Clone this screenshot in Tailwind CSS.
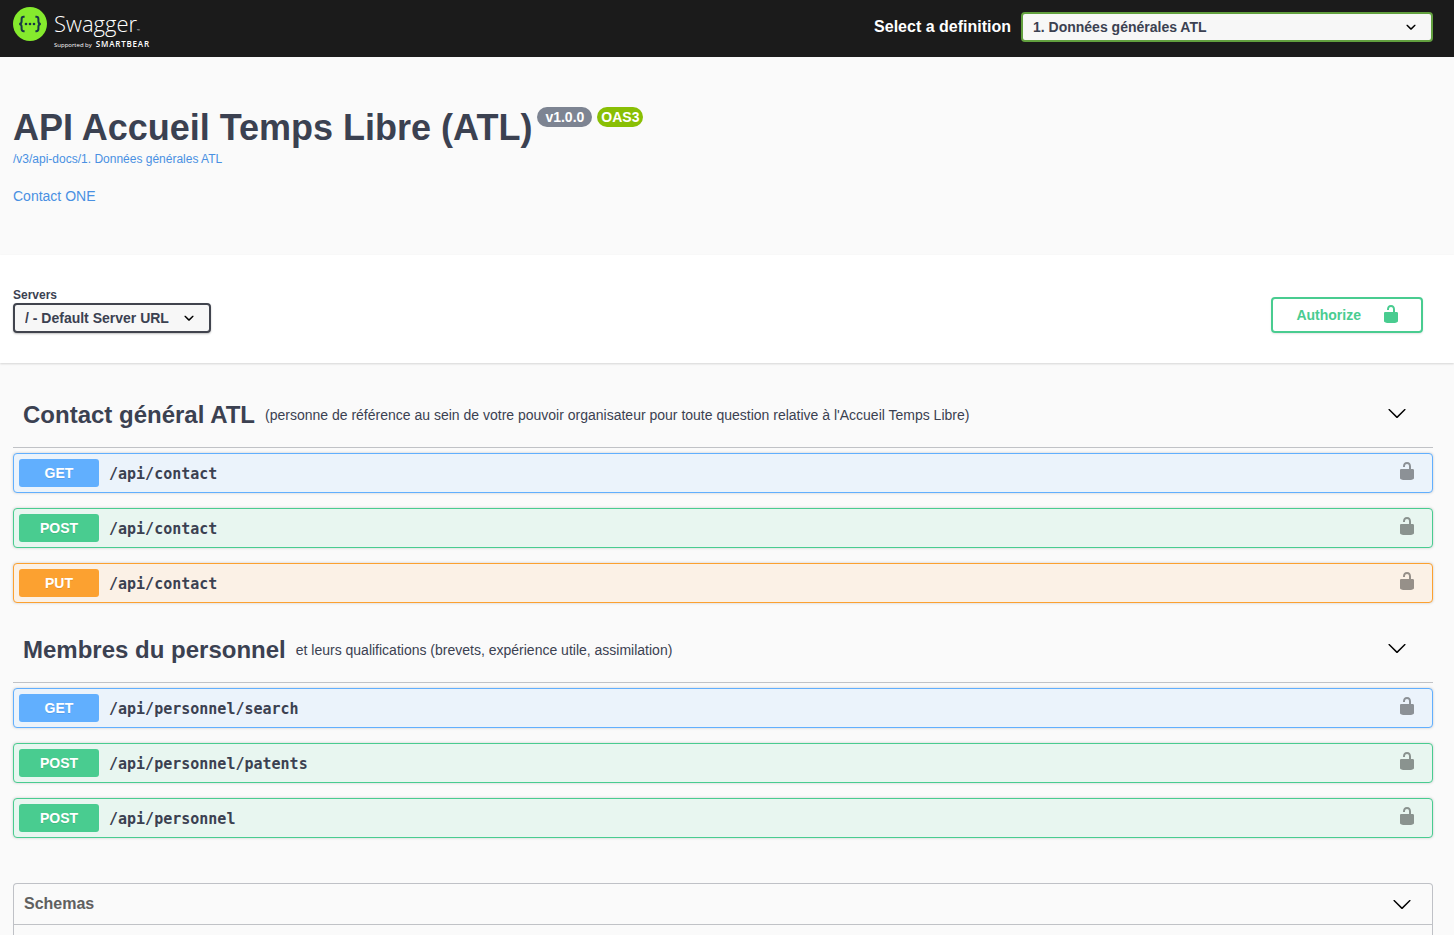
<!DOCTYPE html>
<html lang="fr">
<head>
<meta charset="utf-8">
<meta name="viewport" content="width=device-width, initial-scale=1">
<title>Swagger UI</title>
<script src="https://cdn.jsdelivr.net/npm/@tailwindcss/browser@4"></script>
</head>
<body class="flex min-h-screen flex-col bg-[#fafafa] font-['Liberation_Sans',Arial,sans-serif] text-[#3b4151]">
<svg class="hidden" aria-hidden="true">
  <symbol id="unlocked" viewBox="0 0 20 20"><path d="M15.8 8H14V5.6C14 2.703 12.665 1 10 1 7.334 1 6 2.703 6 5.6V6h2v-.801C8 3.754 8.797 3 10 3c1.203 0 2 .754 2 2.199V8H4c-.553 0-1 .646-1 1.199V17c0 .549.428 1.139.951 1.307l1.197.387C5.672 18.861 6.55 19 7.1 19h5.8c.549 0 1.428-.139 1.951-.307l1.196-.387c.524-.167.953-.757.953-1.306V9.199C17 8.646 16.352 8 15.8 8z"/></symbol>
  <symbol id="arrow-down" viewBox="0 0 20 20"><path d="M17.418 6.109c.272-.268.709-.268.979 0s.271.701 0 .969l-7.908 7.83c-.27.268-.707.268-.979 0l-7.908-7.83c-.27-.268-.27-.701 0-.969.271-.268.709-.268.979 0L10 13.25l7.418-7.141z"/></symbol>
  <symbol id="select-arrow" viewBox="0 0 20 20"><path d="M13.418 7.859c.271-.268.709-.268.978 0 .27.268.272.701 0 .969l-3.908 3.83c-.27.268-.707.268-.979 0l-3.908-3.83c-.27-.267-.27-.701 0-.969.271-.268.709-.268.978 0L10 11l3.418-3.141z"/></symbol>
</svg>

<header class="flex h-[57px] items-center justify-between bg-[#1b1b1b] pr-[21px] pl-[13px] text-white">
  <a href="#" class="flex h-[43px] items-start gap-[7px]" aria-label="Swagger, supported by SmartBear">
    <svg class="size-[34px] shrink-0" viewBox="0 0 34 34" aria-hidden="true">
      <circle cx="17" cy="17" r="17" fill="#85ea2d"/>
      <g fill="none" stroke="#173647" stroke-width="2">
        <path d="M11.600 9.800h-.9c-1.500 0-2.100.7-2.100 2.100v2.300c0 1.800-.6 2.600-2.300 2.800 1.700.2 2.300 1 2.300 2.800v2.300c0 1.400.6 2.100 2.100 2.100h.9"/>
        <path d="M22.400 9.800h.9c1.500 0 2.100.7 2.100 2.100v2.300c0 1.800.6 2.600 2.300 2.800-1.700.2-2.300 1-2.300 2.800v2.300c0 1.400-.6 2.100-2.100 2.100h-.9"/>
      </g>
      <g fill="#173647"><circle cx="13" cy="17" r="1.300"/><circle cx="17" cy="17" r="1.300"/><circle cx="21" cy="17" r="1.300"/></g>
    </svg>
    <span class="flex flex-col pt-px font-['Open_Sans',sans-serif]">
      <span class="flex items-baseline text-[22px] leading-[30px] font-light">Swagger<span class="text-[4px] leading-none">™</span></span>
      <span class="flex items-baseline gap-1 text-[6px] leading-[11px] whitespace-nowrap">Supported by<span class="text-[8px] font-semibold tracking-widest">SMARTBEAR</span></span>
    </span>
  </a>
  <div class="flex items-center gap-[10px] pb-[3px]">
    <label for="definition" class="text-base font-bold">Select a definition</label>
    <div class="relative w-[412px]">
      <select id="definition" class="h-[30px] w-full appearance-none rounded border-2 border-[#62a03f] bg-[#f7f7f7] pr-10 pl-[10px] text-sm font-bold text-[#3b4151]">
        <option>1. Données générales ATL</option>
      </select>
      <svg class="pointer-events-none absolute top-[5px] right-3 size-5 fill-black" aria-hidden="true"><use href="#select-arrow"/></svg>
    </div>
  </div>
</header>

<section class="h-[198px] pt-12 pl-[13px]">
  <div class="flex items-start gap-[5px]">
    <h1 class="text-4xl leading-[46px] font-bold">API Accueil Temps Libre (ATL)</h1>
    <span class="mt-[2px] rounded-full bg-[#7d8492] px-2 text-sm leading-5 font-bold text-white">v1.0.0</span>
    <span class="mt-[2px] rounded-full bg-[#89bf04] px-1 text-sm leading-5 font-bold text-white">OAS3</span>
  </div>
  <a href="#" class="block text-xs leading-4 text-[#4990e2]">/v3/api-docs/1. Données générales ATL</a>
  <a href="#" class="mt-[19px] block text-sm text-[#4990e2]">Contact ONE</a>
</section>

<section class="flex h-[108px] items-start justify-between bg-white pr-[31px] pl-[13px] shadow-[0_1px_2px_rgba(0,0,0,0.15)]">
  <div class="pt-8">
    <label for="servers" class="block text-xs font-bold">Servers</label>
    <div class="relative w-[198px]">
      <select id="servers" class="h-[30px] w-full appearance-none rounded border-2 border-[#41444e] bg-[#f7f7f7] pr-8 pl-[10px] text-sm font-bold text-[#3b4151] shadow-[0_1px_2px_rgba(0,0,0,0.25)]">
        <option>/ - Default Server URL</option>
      </select>
      <svg class="pointer-events-none absolute top-[5px] right-3 size-5 fill-black" aria-hidden="true"><use href="#select-arrow"/></svg>
    </div>
  </div>
  <button type="button" class="mt-[42px] flex h-9 items-center gap-5 rounded border-2 border-[#49cc90] pr-5 pl-[23px] text-sm font-bold text-[#49cc90] shadow-[0_1px_2px_rgba(0,0,0,0.1)]">Authorize<svg class="mb-[2px] size-5 fill-current" aria-hidden="true"><use href="#unlocked"/></svg></button>
</section>

<main class="flex grow flex-col pr-[21px] pl-[13px]">
  <section class="pt-[19px]">
    <div class="flex h-[66px] items-center gap-[10px] border-b border-[#3b4151]/30 pr-[26px] pl-[10px]">
      <h2 class="text-2xl font-bold">Contact général ATL</h2>
      <p class="grow text-sm">(personne de référence au sein de votre pouvoir organisateur pour toute question relative à l'Accueil Temps Libre)</p>
      <button type="button" class="pb-1" aria-label="Replier Contact général ATL"><svg class="size-5 fill-black" aria-hidden="true"><use href="#arrow-down"/></svg></button>
    </div>
    <div class="flex flex-col gap-[15px] pt-[5px]">
      <div class="flex h-10 items-center rounded border border-[#61affe] bg-[#ebf3fb] pr-[15px] pl-[5px] shadow-[0_0_3px_rgba(0,0,0,0.19)]">
        <span class="w-20 rounded-[3px] bg-[#61affe] text-center text-sm leading-7 font-bold text-white text-shadow-[0_1px_0_rgba(0,0,0,0.1)]">GET</span>
        <a href="#" class="grow px-[10px] pt-[2px] font-['DejaVu_Sans_Mono',monospace] text-[15px] font-bold">/api/contact</a>
        <button type="button" class="pb-1" aria-label="Autorisation"><svg class="size-5 fill-black opacity-40" aria-hidden="true"><use href="#unlocked"/></svg></button>
      </div>
      <div class="flex h-10 items-center rounded border border-[#49cc90] bg-[#e8f6f0] pr-[15px] pl-[5px] shadow-[0_0_3px_rgba(0,0,0,0.19)]">
        <span class="w-20 rounded-[3px] bg-[#49cc90] text-center text-sm leading-7 font-bold text-white text-shadow-[0_1px_0_rgba(0,0,0,0.1)]">POST</span>
        <a href="#" class="grow px-[10px] pt-[2px] font-['DejaVu_Sans_Mono',monospace] text-[15px] font-bold">/api/contact</a>
        <button type="button" class="pb-1" aria-label="Autorisation"><svg class="size-5 fill-black opacity-40" aria-hidden="true"><use href="#unlocked"/></svg></button>
      </div>
      <div class="flex h-10 items-center rounded border border-[#fca130] bg-[#fbf1e6] pr-[15px] pl-[5px] shadow-[0_0_3px_rgba(0,0,0,0.19)]">
        <span class="w-20 rounded-[3px] bg-[#fca130] text-center text-sm leading-7 font-bold text-white text-shadow-[0_1px_0_rgba(0,0,0,0.1)]">PUT</span>
        <a href="#" class="grow px-[10px] pt-[2px] font-['DejaVu_Sans_Mono',monospace] text-[15px] font-bold">/api/contact</a>
        <button type="button" class="pb-1" aria-label="Autorisation"><svg class="size-5 fill-black opacity-40" aria-hidden="true"><use href="#unlocked"/></svg></button>
      </div>
    </div>
  </section>

  <section class="pt-[14px]">
    <div class="flex h-[66px] items-center gap-[10px] border-b border-[#3b4151]/30 pr-[26px] pl-[10px]">
      <h2 class="text-2xl font-bold">Membres du personnel</h2>
      <p class="grow text-sm">et leurs qualifications (brevets, expérience utile, assimilation)</p>
      <button type="button" class="pb-1" aria-label="Replier Membres du personnel"><svg class="size-5 fill-black" aria-hidden="true"><use href="#arrow-down"/></svg></button>
    </div>
    <div class="flex flex-col gap-[15px] pt-[5px]">
      <div class="flex h-10 items-center rounded border border-[#61affe] bg-[#ebf3fb] pr-[15px] pl-[5px] shadow-[0_0_3px_rgba(0,0,0,0.19)]">
        <span class="w-20 rounded-[3px] bg-[#61affe] text-center text-sm leading-7 font-bold text-white text-shadow-[0_1px_0_rgba(0,0,0,0.1)]">GET</span>
        <a href="#" class="grow px-[10px] pt-[2px] font-['DejaVu_Sans_Mono',monospace] text-[15px] font-bold">/api/personnel/search</a>
        <button type="button" class="pb-1" aria-label="Autorisation"><svg class="size-5 fill-black opacity-40" aria-hidden="true"><use href="#unlocked"/></svg></button>
      </div>
      <div class="flex h-10 items-center rounded border border-[#49cc90] bg-[#e8f6f0] pr-[15px] pl-[5px] shadow-[0_0_3px_rgba(0,0,0,0.19)]">
        <span class="w-20 rounded-[3px] bg-[#49cc90] text-center text-sm leading-7 font-bold text-white text-shadow-[0_1px_0_rgba(0,0,0,0.1)]">POST</span>
        <a href="#" class="grow px-[10px] pt-[2px] font-['DejaVu_Sans_Mono',monospace] text-[15px] font-bold">/api/personnel/patents</a>
        <button type="button" class="pb-1" aria-label="Autorisation"><svg class="size-5 fill-black opacity-40" aria-hidden="true"><use href="#unlocked"/></svg></button>
      </div>
      <div class="flex h-10 items-center rounded border border-[#49cc90] bg-[#e8f6f0] pr-[15px] pl-[5px] shadow-[0_0_3px_rgba(0,0,0,0.19)]">
        <span class="w-20 rounded-[3px] bg-[#49cc90] text-center text-sm leading-7 font-bold text-white text-shadow-[0_1px_0_rgba(0,0,0,0.1)]">POST</span>
        <a href="#" class="grow px-[10px] pt-[2px] font-['DejaVu_Sans_Mono',monospace] text-[15px] font-bold">/api/personnel</a>
        <button type="button" class="pb-1" aria-label="Autorisation"><svg class="size-5 fill-black opacity-40" aria-hidden="true"><use href="#unlocked"/></svg></button>
      </div>
    </div>
  </section>

  <section class="mt-[45px] grow rounded-t border border-b-0 border-[#3b4151]/30">
    <button type="button" class="flex h-[41px] w-full items-center justify-between border-b border-[#3b4151]/30 pr-5 pl-[10px] text-base font-bold text-[#606060]">Schemas<svg class="size-5 fill-black" aria-hidden="true"><use href="#arrow-down"/></svg></button>
  </section>
</main>
</body>
</html>
